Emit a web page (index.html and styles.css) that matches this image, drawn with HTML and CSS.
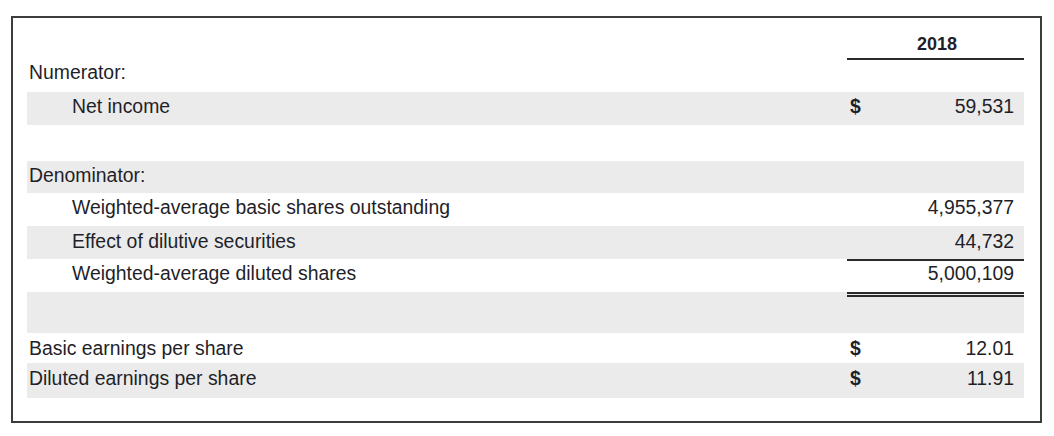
FILE: index.html
```html
<!DOCTYPE html>
<html lang="en">
<head>
<meta charset="utf-8">
<title>Earnings per share</title>
<link rel="stylesheet" href="styles.css">
</head>
<body>
<div class="frame">
  <div class="row head">
    <div class="label"></div>
    <div class="amt year">2018</div>
  </div>
  <div class="row r-num">
    <div class="label">Numerator:</div>
    <div class="amt"></div>
  </div>
  <div class="row r-net shade">
    <div class="label indent">Net income</div>
    <div class="amt"><span class="cur">$</span><span class="val">59,531</span></div>
  </div>
  <div class="row r-gap"></div>
  <div class="row r-den shade">
    <div class="label">Denominator:</div>
    <div class="amt"></div>
  </div>
  <div class="row r-wb">
    <div class="label indent">Weighted-average basic shares outstanding</div>
    <div class="amt"><span class="cur"></span><span class="val">4,955,377</span></div>
  </div>
  <div class="row r-eff shade">
    <div class="label indent">Effect of dilutive securities</div>
    <div class="amt"><span class="cur"></span><span class="val">44,732</span></div>
  </div>
  <div class="row r-wd">
    <div class="label indent">Weighted-average diluted shares</div>
    <div class="amt rule-top"><span class="cur"></span><span class="val">5,000,109</span></div>
  </div>
  <div class="row r-empty shade">
    <div class="label"></div>
    <div class="amt rule-double"></div>
  </div>
  <div class="row r-basic">
    <div class="label">Basic earnings per share</div>
    <div class="amt"><span class="cur">$</span><span class="val">12.01</span></div>
  </div>
  <div class="row r-dil shade">
    <div class="label">Diluted earnings per share</div>
    <div class="amt"><span class="cur">$</span><span class="val">11.91</span></div>
  </div>
</div>
</body>
</html>
```

FILE: styles.css
```css
html, body {
  margin: 0;
  padding: 0;
  background: #ffffff;
}

body {
  font-family: "Liberation Sans", Arial, sans-serif;
  color: #1f1f29;
  font-size: 19.4px;
}

.frame {
  box-sizing: border-box;
  width: 1031px;
  height: 407px;
  margin: 16px 0 0 11px;
  border: 2px solid #3c3c3c;
  padding: 0 16px 0 14px;
  display: flex;
  flex-direction: column;
}

.row {
  display: grid;
  grid-template-columns: 1fr 177px;
  box-sizing: border-box;
  flex: none;
}

.shade {
  background: #ebebeb;
}

.label {
  display: flex;
  align-items: center;
  padding: 0 0 4px 2px;
  white-space: nowrap;
}

.label.indent {
  padding-left: 45px;
}

.amt {
  display: flex;
  align-items: center;
  justify-content: space-between;
  box-sizing: border-box;
  padding: 0 10px 4px 3px;
}

.cur {
  font-weight: bold;
}

.head {
  height: 42px;
}

.amt.year {
  justify-content: center;
  align-items: flex-end;
  font-weight: bold;
  font-size: 18px;
  line-height: 20px;
  padding: 0 0 4px 3px;
  border-bottom: 2px solid #2a2a2a;
}

.r-num { height: 32px; }
.r-num .label { padding-bottom: 8px; }
.r-net { height: 33px; }
.r-net .label, .r-net .amt { padding-bottom: 5px; }
.r-gap { height: 36px; }
.r-den { height: 32px; }
.r-wb { height: 33px; }
.r-eff { height: 33px; }
.r-eff .label, .r-eff .amt { padding-bottom: 2px; }
.r-wd { height: 33px; }
.r-wd .label { padding-top: 2px; padding-bottom: 6px; }
.r-empty { height: 41px; }
.r-basic { height: 30px; }
.r-basic .label, .r-basic .amt { padding-bottom: 0; }
.r-dil { height: 35px; }
.r-dil .label, .r-dil .amt { padding-bottom: 5px; }

.rule-top {
  border-top: 2px solid #2a2a2a;
}

.r-wd .amt { padding-bottom: 6px; }

.rule-double {
  border-top: 5px double #2a2a2a;
}
```
